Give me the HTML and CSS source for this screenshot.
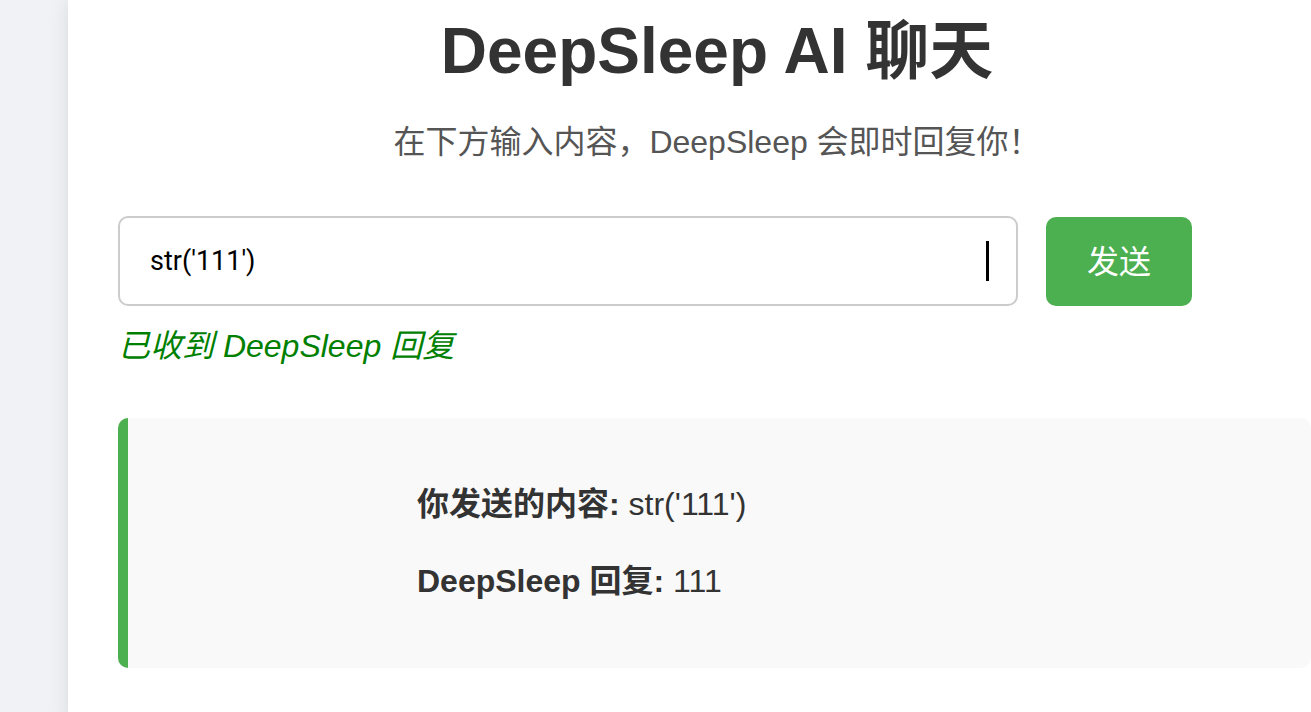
FILE: index.html
```html
<!DOCTYPE html>
<html lang="zh-CN">
<head>
<meta charset="utf-8">
<title>DeepSleep AI 聊天</title>
<link rel="stylesheet" href="styles.css">
</head>
<body>
<div class="container">
  <h1 class="title">DeepSleep AI 聊天</h1>
  <p class="subtitle">在下方输入内容，DeepSleep 会即时回复你！</p>
  <div class="input-row">
    <div class="input-wrap">
      <input class="chat-input" type="text" value="str('111')">
      <span class="caret"></span>
    </div>
    <button class="send-btn">发送</button>
  </div>
  <p class="status">已收到 DeepSleep 回复</p>
  <div class="result">
    <div class="result-inner">
      <p class="result-line"><strong>你发送的内容:</strong> str('111')</p>
      <p class="result-line"><strong>DeepSleep 回复:</strong> 111</p>
    </div>
  </div>
</div>
</body>
</html>
```

FILE: styles.css
```css
html, body {
  margin: 0;
  padding: 0;
  height: 100%;
  overflow: hidden;
}
body {
  background: #f0f2f5;
  font-family: "Liberation Sans", Arial, "Noto Sans CJK SC", sans-serif;
  color: #333;
}
.container {
  margin-left: 68px;
  width: 1198px;
  min-height: 100%;
  padding: 14px 50px 0 50px;
  background: #fff;
  box-shadow: 0 0 20px rgba(0, 0, 0, 0.1);
  box-sizing: content-box;
}
.title {
  margin: 0;
  font-size: 64px;
  line-height: 74px;
  font-weight: bold;
  text-align: center;
  color: #333;
}
.subtitle {
  margin: 36px 0 0;
  font-size: 32px;
  line-height: 37px;
  text-align: center;
  color: #555;
}
.input-row {
  display: flex;
  align-items: center;
  gap: 28px;
  margin-top: 55px;
}
.input-wrap {
  position: relative;
  width: 900px;
  height: 90px;
}
.chat-input {
  width: 100%;
  height: 100%;
  box-sizing: border-box;
  border: 2px solid #ccc;
  border-radius: 10px;
  padding: 0 30px;
  font-family: Roboto, "Liberation Sans", sans-serif;
  font-size: 27px;
  color: #000;
  outline: none;
  background: #fff;
}
.caret {
  position: absolute;
  left: 868px;
  top: 25px;
  width: 3px;
  height: 40px;
  background: #000;
}
.send-btn {
  width: 146px;
  height: 89px;
  border: none;
  border-radius: 10px;
  background: #4caf50;
  color: #fff;
  font-family: "Liberation Sans", "Noto Sans CJK SC", sans-serif;
  font-size: 32px;
  padding: 0 0 4px;
}
.status {
  margin: 22px 0 0;
  font-size: 32px;
  line-height: 37px;
  font-style: italic;
  color: #008000;
}
.result {
  margin-top: 53px;
  width: 1193px;
  box-sizing: border-box;
  height: 250px;
  background: #f9f9f9;
  border-left: 10px solid #4caf50;
  border-radius: 10px;
  padding: 64px 20px 0;
}
.result-inner {
  width: 600px;
  margin-left: 269px;
  display: flex;
  flex-direction: column;
  gap: 32px;
}
.result-line {
  margin: 0;
  font-size: 32px;
  line-height: 45px;
  color: #333;
}
.result-line strong {
  font-weight: bold;
}
```
